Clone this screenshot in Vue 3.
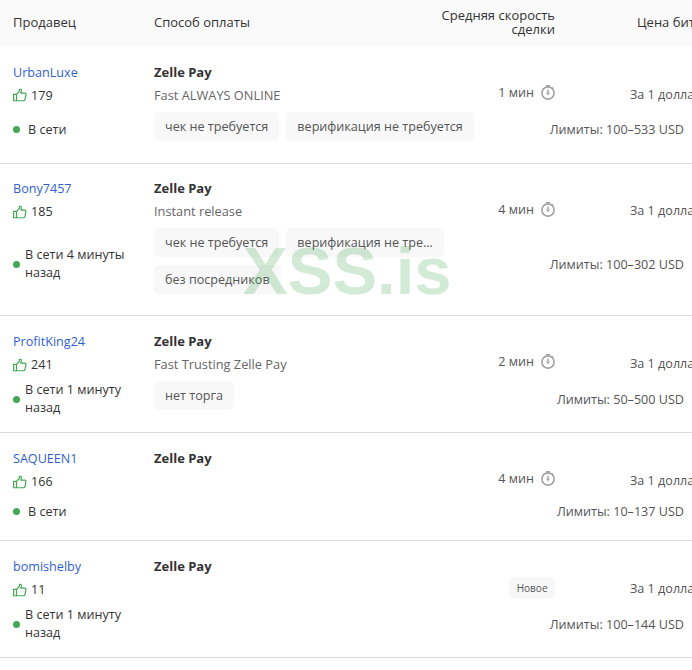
<script setup>
const rows = [
  { name: 'UrbanLuxe', likes: 179, status: 'В сети', pay: 'Zelle Pay', desc: 'Fast ALWAYS ONLINE', tags: ['чек не требуется', 'верификация не требуется'], time: '1 мин', limit: '100–533' },
  { name: 'Bony7457', likes: 185, status: 'В сети 4 минуты назад', long: true, pay: 'Zelle Pay', desc: 'Instant release', tags: ['чек не требуется', 'верификация не требуется', 'без посредников'], time: '4 мин', limit: '100–302' },
  { name: 'ProfitKing24', likes: 241, status: 'В сети 1 минуту назад', long: true, pay: 'Zelle Pay', desc: 'Fast Trusting Zelle Pay', tags: ['нет торга'], time: '2 мин', limit: '50–500' },
  { name: 'SAQUEEN1', likes: 166, status: 'В сети', pay: 'Zelle Pay', desc: '', tags: [], time: '4 мин', limit: '10–137' },
  { name: 'bomishelby', likes: 11, status: 'В сети 1 минуту назад', long: true, pay: 'Zelle Pay', desc: '', tags: [], time: '', limit: '100–144' }
]
</script>

<template>
  <div class="page">
    <div class="head">
      <div>Продавец</div>
      <div>Способ оплаты</div>
      <div class="head-speed">Средняя скорость сделки</div>
      <div class="head-price">Цена биткоина</div>
    </div>
    <div v-for="r in rows" :key="r.name" class="row">
      <div class="seller">
        <a class="name">{{ r.name }}</a>
        <div class="likes">
          <svg class="thumb" width="14" height="13" viewBox="0 0 14 13" fill="none" stroke="#43a854" stroke-width="1.2" stroke-linejoin="round">
            <path d="M.6 5.8h2.9v6.6H.6z" />
            <path d="M3.5 5.8 6.3 3V1.3C6.3.7 6.8.5 7.3.6c.9.3 1.3 1.2 1 2.2l-.5 1.8h4c.8 0 1.4.7 1.2 1.5l-1 4.8c-.2.9-.8 1.5-1.7 1.5H3.5" />
          </svg>
          <span>{{ r.likes }}</span>
        </div>
      </div>
      <div class="pay">
        <div class="pay-name">{{ r.pay }}</div>
        <div v-if="r.desc" class="pay-desc">{{ r.desc }}</div>
      </div>
      <div class="speed">
        <template v-if="r.time">
          <span>{{ r.time }}</span>
          <svg width="14" height="15" viewBox="0 0 14 15" fill="none" stroke="#a3a3a3">
            <circle cx="7" cy="8" r="6.1" stroke-width="1.6" />
            <path d="M5 .8h4M11.2 2.6l1 1M7 4.5v3" stroke-width="1.4" />
            <path d="M5 7.4 7 10.4l2-3z" fill="#a3a3a3" stroke="none" />
          </svg>
        </template>
        <span v-else class="badge">Новое</span>
      </div>
      <div class="price">За 1 доллар США</div>
      <div class="status" :class="{ long: r.long }">
        <i class="dot"></i>
        <span>{{ r.status }}</span>
      </div>
      <div class="tags">
        <span v-for="t in r.tags" :key="t" class="tag" :class="{ cut: r.tags.length === 3 }">{{ t }}</span>
      </div>
      <div class="limits">Лимиты: {{ r.limit }} USD</div>
    </div>
    <div class="mark">XSS.is</div>
  </div>
</template>

<style scoped>
.page {
  position: relative;
  width: 692px;
  height: 670px;
  overflow: hidden;
  background: #fff;
  font-family: "Open Sans", "Noto Sans", sans-serif;
  font-size: 12.6px;
  color: #333;
}
.head {
  display: grid;
  grid-template-columns: 141px 260px 141px minmax(0, 1fr);
  align-items: center;
  height: 46px;
  padding: 0 8px 2px 13px;
  box-sizing: border-box;
  background: #fafafa;
  margin-bottom: 1px;
  font-size: 13px;
  line-height: 14px;
  white-space: nowrap;
}
.head-speed {
  white-space: normal;
  text-align: right;
}
.head-price {
  margin-left: 82px;
}
.row {
  display: grid;
  grid-template-columns: 141px 320px 81px minmax(0, 1fr);
  grid-template-rows: auto auto;
  padding: 14.9px 8px 15.1px 13px;
  border-bottom: 1px solid #dcdcdc;
}
.seller {
  transform: translateY(0.5px);
}
.name {
  display: block;
  line-height: 20px;
  color: #2f5fd0;
}
.likes {
  display: flex;
  align-items: center;
  gap: 4px;
  margin-top: 3px;
  line-height: 20px;
}
.thumb {
  flex: none;
}
.pay-name {
  font-size: 13px;
  line-height: 20px;
  font-weight: 700;
}
.pay-desc {
  margin-top: 3px;
  font-size: 12.8px;
  line-height: 20px;
  color: #666;
}
.speed {
  display: flex;
  align-items: center;
  justify-content: flex-end;
  gap: 7px;
  padding-top: 20.6px;
  height: 20px;
  color: #555;
}
.badge {
  margin-top: 2px;
  padding: 0 7.5px;
  line-height: 22px;
  font-size: 10px;
  font-weight: 500;
  background: #f8f8f8;
  border-radius: 5px;
  color: #555;
}
.price {
  margin: 23px 0 0 75px;
  line-height: 20px;
  white-space: nowrap;
  color: #555;
}
.status {
  display: flex;
  align-items: center;
  gap: 8px;
  min-height: 27px;
  margin-top: 7px;
  width: 118px;
  line-height: 18px;
}
.status.long {
  gap: 5px;
}
.dot {
  flex: none;
  width: 7px;
  height: 7px;
  border-radius: 50%;
  background: #43a854;
}
.tags {
  display: flex;
  flex-wrap: wrap;
  gap: 7.4px 7px;
  margin-top: 7px;
  max-width: 325px;
}
.tags:not(:empty) {
  padding-bottom: 6.56px;
}
.tag {
  box-sizing: border-box;
  height: 29px;
  line-height: 29px;
  padding: 0 11px;
  background: #f8f8f8;
  border-radius: 5px;
  color: #555;
  white-space: nowrap;
  overflow: hidden;
  text-overflow: ellipsis;
}
.tag.cut:nth-child(2) {
  max-width: 158px;
}
.limits {
  grid-column: 3 / 5;
  align-self: center;
  justify-self: end;
  margin-top: 7px;
  white-space: nowrap;
  color: #555;
}
.mark {
  position: absolute;
  left: 243px;
  top: 232px;
  font-family: "Liberation Sans", Arial, sans-serif;
  font-size: 67px;
  font-weight: 700;
  line-height: 77px;
  color: rgba(67, 168, 84, 0.24);
  pointer-events: none;
}
</style>
